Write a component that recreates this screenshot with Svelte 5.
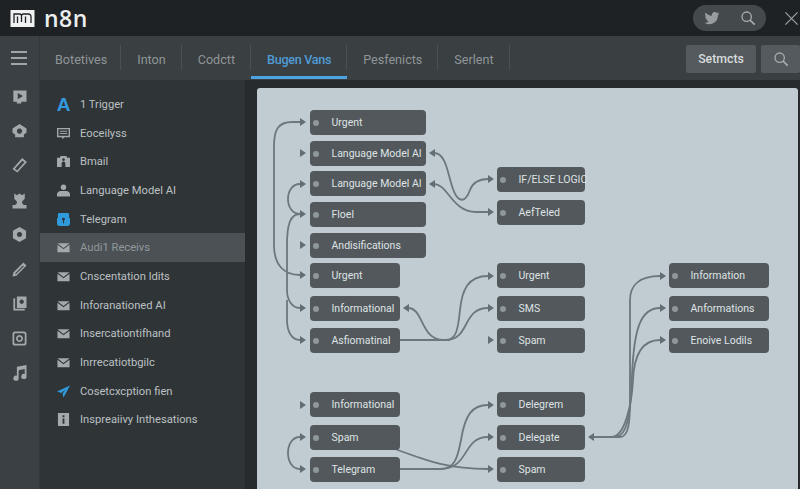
<script>
  const tabs = [
    { label: "Botetives" },
    { label: "Inton" },
    { label: "Codctt" },
    { label: "Bugen Vans", active: true },
    { label: "Pesfenicts" },
    { label: "Serlent" },
  ];

  const railIcons = [
    "M5 5h15v13h-6v2H9v-2H5z M10 8v7l6-3.500z",
    "M12 3.500l8 5v5l-3 2v3H7v-3l-3-2v-5z M12 8.500a3 3 0 1 0 .01 0z",
    "M15 3.500l5.500 4.500L9.500 20 4 16z M15.200 6.500L6.800 15.800l2.500 2 8.300-9.400z",
    "M6 4l3 2 3-2 3 2 3-2v6l-3 3v2l2 2h3v4H4v-4h3l2-2v-2l-3-3z",
    "M12 3.500l7.500 4.250v8.500L12 20.500l-7.500-4.250v-8.500z M12 9a3 3 0 1 0 .01 0z",
    "M16.500 4l3.500 3.500L8.500 19 4 20l1-4.500z M16 7.500L7 16.500l.8.800L17 8.300z",
    "M9 4h11v13H9z M5 6h2v12h11v2H5z M14.500 7.500a2.500 2.500 0 1 0 .01 0z",
    "M7 4h10a3 3 0 0 1 3 3v10a3 3 0 0 1-3 3H7a3 3 0 0 1-3-3V7a3 3 0 0 1 3-3z M7.500 6A1.500 1.500 0 0 0 6 7.500v9A1.500 1.500 0 0 0 7.500 18h9a1.500 1.500 0 0 0 1.500-1.500v-9A1.500 1.500 0 0 0 16.500 6z M12 8a4 4 0 1 1-.01 0z M12 10a2 2 0 1 0 .01 0z",
    "M9 5.500L20 3.500v13a3 3 0 1 1-2-2.800V8L11 9.300V18.500a3 3 0 1 1-2-2.800z",
  ];

  const items = [
    { label: "1 Trigger", icon: "a" },
    { label: "Eoceilyss", icon: "form" },
    { label: "Bmail", icon: "home" },
    { label: "Language Model AI", icon: "user" },
    { label: "Telegram", icon: "tele" },
    { label: "Audi1 Receivs", icon: "mail", active: true },
    { label: "Cnscentation ldits", icon: "mail" },
    { label: "Inforanationed AI", icon: "mail" },
    { label: "Insercationtifhand", icon: "mail" },
    { label: "Inrrecatiotbgilc", icon: "mail" },
    { label: "Cosetcxcption fien", icon: "send" },
    { label: "Inspreaiivy Inthesations", icon: "info" },
  ];

  const C1 = 310, C2 = 497, C3 = 669;
  const nodes = [
    { x: C1, y: 110, w: 116, label: "Urgent" },
    { x: C1, y: 141, w: 116, label: "Language Model AI" },
    { x: C1, y: 171, w: 116, label: "Language Model AI" },
    { x: C1, y: 202, w: 116, label: "Floel" },
    { x: C1, y: 233, w: 116, label: "Andisifications" },
    { x: C1, y: 263, w: 90, label: "Urgent" },
    { x: C1, y: 296, w: 90, label: "Informational" },
    { x: C1, y: 328, w: 90, label: "Asfiomatinal" },
    { x: C1, y: 392, w: 90, label: "Informational" },
    { x: C1, y: 425, w: 90, label: "Spam" },
    { x: C1, y: 457, w: 90, label: "Telegram" },
    { x: C2, y: 167, w: 88, label: "IF/ELSE LOGIC" },
    { x: C2, y: 200, w: 88, label: "AefTeled" },
    { x: C2, y: 263, w: 88, label: "Urgent" },
    { x: C2, y: 296, w: 88, label: "SMS" },
    { x: C2, y: 328, w: 88, label: "Spam" },
    { x: C2, y: 392, w: 88, label: "Delegrem" },
    { x: C2, y: 425, w: 88, label: "Delegate" },
    { x: C2, y: 457, w: 88, label: "Spam" },
    { x: C3, y: 263, w: 100, label: "Information" },
    { x: C3, y: 296, w: 100, label: "Anformations" },
    { x: C3, y: 328, w: 100, label: "Enoive Lodils" },
  ];

  const edges = [
    "M300 122 H292 C278 122 274 130 274 146 V245 C274 265 284 275 300 275",
    "M300 184 C284 184 284 214 300 214",
    "M300 214 C290 214 287 225 287 245 V290 C287 300 292 308 300 308",
    "M287 300 V320 C287 332 292 340 300 340",
    "M434 153 C450 153 448 190 458 198 C464 203 468 196 470 190 C473 182 480 179 488 179",
    "M434 184 C448 184 452 212 476 212 H488",
    "M400 340 H446 C456 340 458 330 460 310 C462 290 468 276 488 276",
    "M446 340 C470 340 462 308 488 308",
    "M408 308 C424 308 420 340 444 340 H450",
    "M400 469 H440 C456 469 458 455 461 440 C465 415 472 405 488 405",
    "M440 469 C470 469 462 437 488 437",
    "M395 449 C430 462 450 469 488 469",
    "M300 437 C284 437 284 469 300 469",
    "M594 437 H620 C628 437 630 425 630 400 V300 C630 285 640 276 660 276",
    "M594 437 H615 C628 437 631 410 632 375 C634 330 640 308 660 308",
    "M594 437 H612 C626 436 632 400 633 380 C634 355 642 340 660 340",
  ];

  // tip x, y and direction of each arrowhead
  const arrows = [
    [306, 122, 1], [306, 153, 1], [306, 184, 1], [306, 214, 1], [306, 245, 1],
    [306, 275, 1], [306, 308, 1], [306, 340, 1], [306, 405, 1], [306, 437, 1], [306, 469, 1],
    [429, 153, -1], [429, 184, -1], [403, 308, -1],
    [494, 179, 1], [494, 212, 1], [494, 276, 1], [494, 308, 1], [494, 340, 1],
    [494, 405, 1], [494, 437, 1], [494, 469, 1],
    [588, 437, -1],
    [666, 276, 1], [666, 308, 1], [666, 340, 1],
  ];

  const head = ([x, y, d]) => `${x},${y} ${x - 6 * d},${y - 4} ${x - 6 * d},${y + 4}`;
</script>

<div class="page">
  <header class="topbar">
    <div class="brand">
      <svg class="logo" viewBox="0 0 25 19" aria-hidden="true">
        <rect x="0.500" y="1" width="24" height="17" fill="#f0f2f2"/>
        <path fill="none" stroke="#1e2224" stroke-width="1.300" d="M4 14V5h5.500a2 2 0 0 1 2 2v6M7.500 14V7.500M11.500 7a2 2 0 0 1 2-2h5a2.500 2.500 0 0 1 2.500 2.500V14M15.500 14V7.500"/>
      </svg>
      <span class="wordmark">n8n</span>
    </div>
    <div class="top-actions">
      <div class="pill">
        <svg viewBox="0 0 24 24" class="tw" aria-hidden="true">
          <path fill="#989c9e" d="M23 5.100c-.8.400-1.700.600-2.600.700.900-.600 1.600-1.400 2-2.500-.900.500-1.900.900-2.900 1.100A4.600 4.600 0 0 0 11.700 8.600C7.900 8.400 4.500 6.600 2.200 3.800c-1.200 2.100-.6 4.800 1.400 6.100-.700 0-1.400-.200-2-.600 0 2.200 1.500 4.100 3.700 4.600-.700.200-1.400.200-2.100.100.600 1.900 2.300 3.200 4.300 3.200A9.300 9.300 0 0 1 .8 19.100 13 13 0 0 0 20.900 7.500c.9-.600 1.600-1.400 2.100-2.400z"/>
        </svg>
        <svg viewBox="0 0 24 24" class="mag" aria-hidden="true">
          <circle cx="10" cy="10" r="7" fill="none" stroke="#a8acae" stroke-width="2"/>
          <path d="M15 15l7 7" stroke="#a8acae" stroke-width="2.600" fill="none"/>
        </svg>
      </div>
      <svg viewBox="0 0 16 16" class="close" aria-hidden="true">
        <path d="M1.500 1.500l13 13M14.500 1.500l-13 13" stroke="#9da1a3" stroke-width="1.300" fill="none"/>
      </svg>
    </div>
  </header>

  <div class="body">
    <aside class="rail">
      <button class="burger" aria-label="Menu"><span></span><span></span><span></span></button>
      <div class="rail-icons">
        {#each railIcons as d}
          <svg viewBox="0 0 24 24" aria-hidden="true"><path fill="#a4a9ab" fill-rule="evenodd" d={d}/></svg>
        {/each}
      </div>
    </aside>

    <div class="content">
      <nav class="tabs">
        {#each tabs as tab}
          <div class="tab" class:active={tab.active}>{tab.label}</div>
        {/each}
        <div class="tab-tools">
          <button class="settings">Setmcts</button>
          <button class="search" aria-label="Search">
            <svg viewBox="0 0 24 24" aria-hidden="true">
              <circle cx="10" cy="10" r="7" fill="none" stroke="#a8acae" stroke-width="2"/>
              <path d="M15 15l7 7" stroke="#a8acae" stroke-width="2.600" fill="none"/>
            </svg>
          </button>
        </div>
      </nav>

      <div class="panes">
        <ul class="list">
          {#each items as item}
            <li class:active={item.active}>
              <span class="item-icon">
                {#if item.icon === "a"}
                  <span class="letter">A</span>
                {:else if item.icon === "form"}
                  <svg viewBox="0 0 14 14" aria-hidden="true"><path fill="#a4a9ab" fill-rule="evenodd" d="M0 1h14v10H8l-2 2-1-2H0z M1.500 2.500v7h11v-7z M3 4h8v1H3z M3 6.500h8v1H3z"/></svg>
                {:else if item.icon === "home"}
                  <svg viewBox="0 0 14 14" aria-hidden="true"><path fill="#a4a9ab" fill-rule="evenodd" d="M4 1h6l1 2h3v10H9V9a2 2 0 0 0-4 0v4H0V3h3z M7 3.500a1.500 1.500 0 1 0 .01 0z"/></svg>
                {:else if item.icon === "user"}
                  <svg viewBox="0 0 14 14" aria-hidden="true"><path fill="#a4a9ab" d="M7 0.500a3 3 0 1 1-.01 0z M0 13.500V11c0-2 2-3.500 4-3.500h6c2 0 4 1.500 4 3.500v2.500z"/></svg>
                {:else if item.icon === "tele"}
                  <svg viewBox="0 0 14 14" aria-hidden="true"><path fill="#2f9bdc" fill-rule="evenodd" d="M2 0h10l1 1v4l1 1v5a3 3 0 0 1-3 3H3a3 3 0 0 1-3-3V6l1-1V1z M7 5a1.500 1.500 0 0 0-.6 2.900V11h1.200V7.900A1.500 1.500 0 0 0 7 5z"/></svg>
                {:else if item.icon === "mail"}
                  <svg viewBox="0 0 14 14" aria-hidden="true"><path fill="#a4a9ab" d="M0.500 2.500h13L7 7.500z M0.500 4l6.500 5 6.500-5v8h-13z"/></svg>
                {:else if item.icon === "send"}
                  <svg viewBox="0 0 14 14" aria-hidden="true"><path fill="#2f9bdc" d="M14 0.500L0 7l4.500 1.500L9 5 6 9.500 7 13.500z"/></svg>
                {:else}
                  <svg viewBox="0 0 14 14" aria-hidden="true"><path fill="#a4a9ab" fill-rule="evenodd" d="M1 0h12v14H1z M6 2.500v2h2v-2z M6 6v5.500h2V6z"/></svg>
                {/if}
              </span>
              <span class="item-label">{item.label}</span>
            </li>
          {/each}
        </ul>

        <main class="canvas">
          <svg class="wires" viewBox="257 88 541 401" aria-hidden="true">
            {#each edges as d}
              <path {d}/>
            {/each}
            {#each arrows as a}
              <polygon points={head(a)}/>
            {/each}
          </svg>
          {#each nodes as n}
            <div class="node" style="left:{n.x - 257}px;top:{n.y - 88}px;width:{n.w}px">
              <span class="dot"></span>
              <span class="node-label">{n.label}</span>
            </div>
          {/each}
        </main>
      </div>
    </div>
  </div>
</div>

<style>
  :global(body) {
    margin: 0;
    background: #2a2e30;
    font-family: Roboto, "Noto Sans", sans-serif;
  }

  .page {
    width: 800px;
    height: 489px;
    overflow: hidden;
    display: flex;
    flex-direction: column;
  }

  .topbar {
    height: 36px;
    flex: none;
    background: #1e2224;
    display: flex;
    align-items: center;
    justify-content: space-between;
    padding: 0 1px 0 10px;
  }

  .brand {
    display: flex;
    align-items: center;
    gap: 9px;
  }

  .logo {
    width: 25px;
    height: 19px;
  }

  .wordmark {
    font-family: "Open Sans", sans-serif;
    font-size: 23px;
    font-weight: 600;
    color: #eceeee;
    line-height: 1;
    letter-spacing: 0.5px;
  }

  .top-actions {
    display: flex;
    align-items: center;
    gap: 18px;
  }

  .pill {
    width: 73px;
    height: 26px;
    border-radius: 13px;
    background: #44494b;
    display: flex;
    align-items: center;
    justify-content: space-between;
    padding: 0 10px 0 11px;
    box-sizing: border-box;
  }

  .tw {
    width: 16px;
    height: 16px;
  }

  .mag {
    width: 16px;
    height: 16px;
  }

  .close {
    width: 15px;
    height: 15px;
  }

  .body {
    flex: 1;
    display: flex;
    min-height: 0;
  }

  .rail {
    width: 40px;
    flex: none;
    background: #3a4043;
    border-right: 1px solid #34393b;
    box-sizing: border-box;
  }

  .burger {
    display: flex;
    flex-direction: column;
    gap: 4.500px;
    width: 100%;
    height: 44px;
    padding: 0 1px 0 0;
    border: 0;
    background: none;
    align-items: center;
    justify-content: center;
  }

  .burger span {
    width: 16px;
    height: 1.500px;
    background: #a0a5a7;
  }

  .rail-icons {
    display: flex;
    flex-direction: column;
    align-items: center;
    gap: 13.500px;
    padding: 6px 1px 0 0;
  }

  .rail-icons svg {
    width: 21px;
    height: 21px;
  }

  .content {
    flex: 1;
    min-width: 0;
    display: flex;
    flex-direction: column;
  }

  .tabs {
    height: 44px;
    flex: none;
    background: #3a3f42;
    display: flex;
    align-items: stretch;
    box-sizing: border-box;
    padding: 3px 0 1px;
    color: #8f9597;
    font-size: 12.600px;
  }

  .tab {
    display: flex;
    align-items: center;
    padding: 0 16px;
    position: relative;
  }

  .tab:first-child {
    padding: 0 14px 0 15px;
  }

  .tab:not(:last-of-type)::after {
    content: "";
    position: absolute;
    right: 0;
    top: 6px;
    bottom: 9px;
    width: 1px;
    background: #4a5053;
  }

  .tab.active {
    color: #4f9bd6;
    font-weight: 500;
    letter-spacing: -0.3px;
    box-shadow: inset 0 -3px 0 #4ba3e0;
  }

  .tab-tools {
    margin-left: auto;
    display: flex;
    align-items: center;
    gap: 5px;
  }

  .settings,
  .search {
    height: 28px;
    border: 0;
    border-radius: 2px;
    background: #545a5e;
    padding: 0;
    color: #d9dcdd;
    font: 500 12.300px Roboto, sans-serif;
  }

  .settings {
    width: 70px;
  }

  .search {
    width: 39px;
    display: flex;
    align-items: center;
    justify-content: center;
  }

  .search svg {
    width: 16px;
    height: 16px;
  }

  .panes {
    flex: 1;
    min-height: 0;
    display: flex;
    background: #272b2d;
  }

  .list {
    flex: none;
    margin: 0;
    padding: 10px 0 0;
    list-style: none;
    background: #2f3437;
    border-right: 1px solid #262a2c;
    width: 205px;
  }

  .list li {
    height: 28.700px;
    display: flex;
    align-items: center;
    padding-left: 17px;
    gap: 10px;
    color: #bcc0c2;
    font-size: 11.200px;
  }

  .list li.active {
    background: #4b5155;
    color: #92989b;
  }

  .item-icon {
    width: 13px;
    height: 14px;
    display: flex;
    align-items: center;
    justify-content: center;
    flex: none;
  }

  .item-icon svg {
    width: 13px;
    height: 13px;
  }

  .letter {
    color: #3498de;
    font: 700 19px "Liberation Sans", sans-serif;
    line-height: 1;
  }

  .canvas {
    position: relative;
    flex: 1;
    margin: 8px 2px 0 11px;
    background: #c0ccd1;
    border-radius: 3px 3px 0 0;
    overflow: hidden;
  }

  .wires {
    position: absolute;
    left: 0;
    top: 0;
    width: 541px;
    height: 401px;
  }

  .wires path {
    fill: none;
    stroke: #6c777d;
    stroke-width: 1.800;
  }

  .wires polygon {
    fill: #636e74;
  }

  .node {
    position: absolute;
    height: 25px;
    background: #52585c;
    border-radius: 4px;
    display: flex;
    align-items: center;
    box-sizing: border-box;
    padding-left: 3px;
    color: #dfe3e4;
    font-size: 10.500px;
    white-space: nowrap;
  }

  .dot {
    width: 6px;
    height: 6px;
    border-radius: 50%;
    background: #8e979b;
    flex: none;
    margin-right: 12.500px;
  }

  .node-label {
    line-height: 1;
    padding-top: 1px;
  }
</style>
